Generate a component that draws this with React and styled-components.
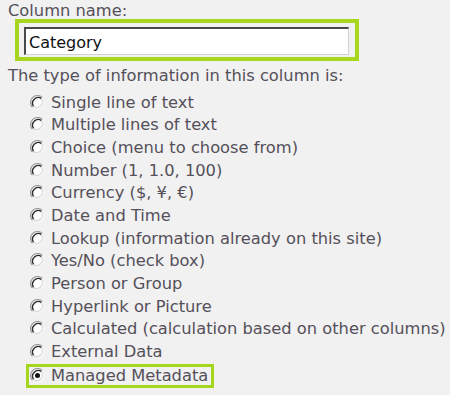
import React from "react";
import styled, { createGlobalStyle } from "styled-components";

const Global = createGlobalStyle`
  html, body { margin: 0; padding: 0; background: #f1f1f1; }
  body { width: 450px; height: 395px; overflow: hidden; }
`;

const Page = styled.div`
  font-family: "DejaVu Sans", Verdana, sans-serif;
  font-size: 16.3px;
  color: #55505a;
  padding: 2px 0 0 8px;
`;

const Label = styled.div`
  line-height: 18px;
  height: 17px;
`;

const Highlight = styled.div`
  margin: 0 0 0 7px;
  width: 331px;
  border: 4px solid #a6d61e;
  padding: 4px 0 2px 5px;
`;

const Input = styled.input`
  box-sizing: border-box;
  display: block;
  width: 325px;
  height: 28px;
  border-style: solid;
  border-width: 2px 1px 1px 2px;
  border-color: #4a4a4a #d0d0d0 #d0d0d0 #4a4a4a;
  background: #fff;
  font-family: "DejaVu Sans", Verdana, sans-serif;
  font-size: 16px;
  color: #111;
  padding: 2px 3px 0;
  outline: none;
`;

const Question = styled.div`
  line-height: 20px;
  margin-top: 5px;
`;

const List = styled.div`
  margin-top: 5px;
  margin-left: 18px;
  display: flex;
  flex-direction: column;
`;

const Option = styled.label`
  display: flex;
  align-items: center;
  gap: 6px;
  width: fit-content;
  white-space: nowrap;
  padding: ${(p) => (p.$highlight ? "0 6px 0 4px" : "0 0 0 4px")};
  outline: ${(p) => (p.$highlight ? "3px solid #a6d61e" : "none")};
  outline-offset: -3px;
  position: relative;
  top: ${(p) => (p.$highlight ? "1px" : "0")};
  height: ${(p) => (p.$highlight ? "24px" : "22.67px")};
`;

const RadioIcon = ({ checked }) => (
  <svg width="15" height="15" viewBox="0 0 15 15" style={{ flex: "none" }}>
    <circle cx="7.5" cy="7.5" r="6" fill="#fff" />
    <path d="M2.55 12.45 A7 7 0 0 1 12.45 2.55" fill="none" stroke="#9a9a9a" strokeWidth="1.2" />
    <path d="M12.45 2.55 A7 7 0 0 1 2.55 12.45" fill="none" stroke="#f4f4f4" strokeWidth="1.2" />
    <path d="M3.6 11.4 A5.6 5.6 0 0 1 11.4 3.6" fill="none" stroke="#2c2c2c" strokeWidth="1.4" />
    <path d="M11.4 3.6 A5.6 5.6 0 0 1 3.6 11.4" fill="none" stroke="#d8d8d8" strokeWidth="1.2" />
    {checked && <circle cx="7.5" cy="7.5" r="2.5" fill="#111" />}
  </svg>
);

const options = [
  "Single line of text",
  "Multiple lines of text",
  "Choice (menu to choose from)",
  "Number (1, 1.0, 100)",
  "Currency ($, ¥, €)",
  "Date and Time",
  "Lookup (information already on this site)",
  "Yes/No (check box)",
  "Person or Group",
  "Hyperlink or Picture",
  "Calculated (calculation based on other columns)",
  "External Data",
  "Managed Metadata",
];

export default function App() {
  const selected = "Managed Metadata";
  return (
    <>
      <Global />
      <Page>
        <Label>Column name:</Label>
        <Highlight>
          <Input defaultValue="Category" />
        </Highlight>
        <Question>The type of information in this column is:</Question>
        <List>
          {options.map((o) => (
            <Option key={o} $highlight={o === selected}>
              <RadioIcon checked={o === selected} />
              <span>{o}</span>
            </Option>
          ))}
        </List>
      </Page>
    </>
  );
}
